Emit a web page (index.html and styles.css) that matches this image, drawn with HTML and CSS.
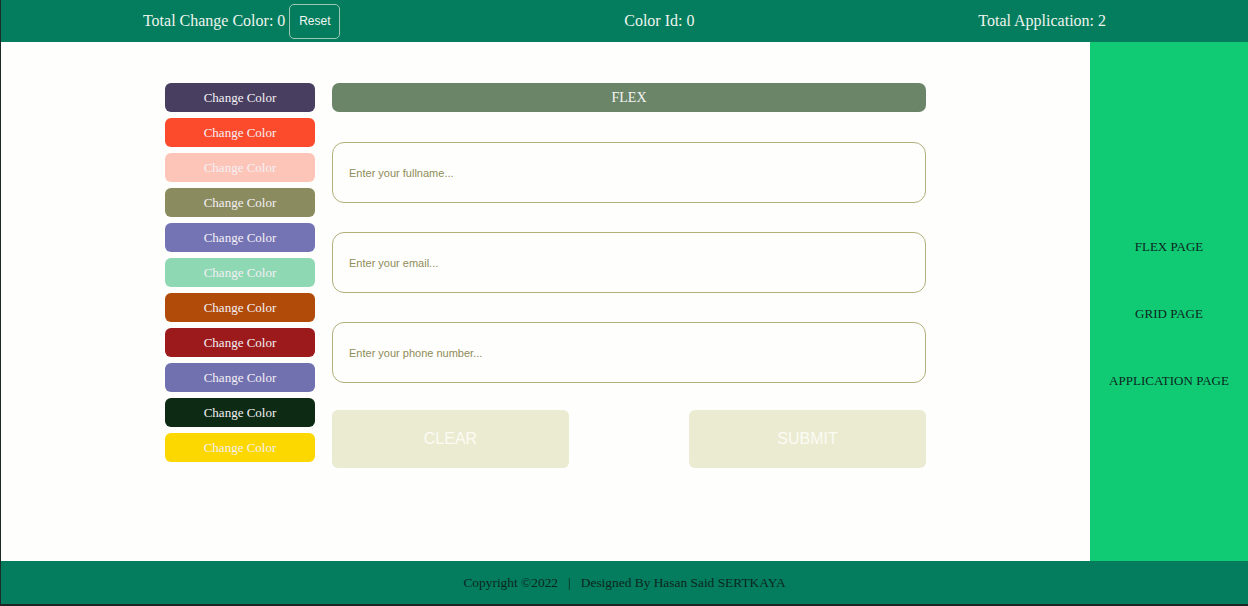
FILE: index.html
```html
<!DOCTYPE html>
<html>
<head>
<meta charset="utf-8">
<link rel="stylesheet" href="styles.css">
</head>
<body>
<div class="page">
  <header class="topbar">
    <div class="stat">Total Change Color: 0 <button class="reset">Reset</button></div>
    <div class="stat">Color Id: 0</div>
    <div class="stat">Total Application: 2</div>
  </header>
  <div class="middle">
    <main class="main">
      <div class="content">
        <div class="colors">
          <button class="cbtn c1">Change Color</button>
          <button class="cbtn c2">Change Color</button>
          <button class="cbtn c3">Change Color</button>
          <button class="cbtn c4">Change Color</button>
          <button class="cbtn c5">Change Color</button>
          <button class="cbtn c6">Change Color</button>
          <button class="cbtn c7">Change Color</button>
          <button class="cbtn c8">Change Color</button>
          <button class="cbtn c9">Change Color</button>
          <button class="cbtn c10">Change Color</button>
          <button class="cbtn c11">Change Color</button>
        </div>
        <div class="form">
          <div class="flexbar">FLEX</div>
          <input class="field" type="text" placeholder="Enter your fullname...">
          <input class="field" type="text" placeholder="Enter your email...">
          <input class="field" type="text" placeholder="Enter your phone number...">
          <div class="actions">
            <button class="act">CLEAR</button>
            <button class="act">SUBMIT</button>
          </div>
        </div>
      </div>
    </main>
    <nav class="side">
      <a class="navlink">FLEX PAGE</a>
      <a class="navlink">GRID PAGE</a>
      <a class="navlink">APPLICATION PAGE</a>
    </nav>
  </div>
  <footer class="footer">Copyright ©2022 &nbsp; | &nbsp; Designed By Hasan Said SERTKAYA</footer>
</div>
</body>
</html>
```

FILE: styles.css
```css
* { box-sizing: border-box; }
html, body { margin: 0; padding: 0; }
body {
  font-family: "Liberation Serif", "Times New Roman", serif;
  background: #1c2626;
  height: 606px;
  overflow: hidden;
}
.page {
  display: flex;
  flex-direction: column;
  height: 604px;
  border-left: 1px solid #1c2a28;
}
.topbar {
  height: 42px;
  flex: none;
  background: #037d5d;
  display: flex;
  justify-content: space-around;
  align-items: center;
  color: #eef4ee;
  font-size: 16px;
}
.stat { display: flex; align-items: center; gap: 4px; }
.reset {
  font-family: "Liberation Sans", Arial, sans-serif;
  font-size: 12px;
  color: #f4f8f4;
  background: transparent;
  border: 1px solid #9cc8b4;
  border-radius: 5px;
  width: 51px;
  height: 35px;
  padding: 0;
}
.middle {
  flex: 1;
  display: flex;
}
.main {
  flex: 1;
  background: #fefefc;
  display: flex;
  justify-content: center;
  padding-top: 41px;
}
.content {
  display: flex;
  gap: 17px;
  align-items: flex-start;
}
.colors {
  width: 150px;
  display: flex;
  flex-direction: column;
  gap: 6px;
}
.cbtn {
  height: 29px;
  border: none;
  border-radius: 6px;
  color: #f4f0f4;
  font-family: "Liberation Serif", "Times New Roman", serif;
  font-size: 13px;
  padding: 0;
}
.c1 { background: #473e60; }
.c2 { background: #fb4b2c; }
.c3 { background: #fdc4b8; }
.c4 { background: #8b8b60; }
.c5 { background: #7474b5; }
.c6 { background: #8fd8b4; }
.c7 { background: #b14b0a; }
.c8 { background: #9c1a1c; }
.c9 { background: #7171b0; }
.c10 { background: #0c2a14; }
.c11 { background: #fcd700; }
.form {
  width: 594px;
  display: flex;
  flex-direction: column;
}
.flexbar {
  height: 29px;
  border-radius: 7px;
  background: #6b8569;
  color: #f4f4f4;
  font-size: 14px;
  display: flex;
  align-items: center;
  justify-content: center;
  margin-bottom: 30px;
}
.field {
  height: 61px;
  border: 1px solid #b3b07c;
  border-radius: 12px;
  padding: 0 16px;
  font-family: "Liberation Sans", Arial, sans-serif;
  font-size: 11px;
  background: transparent;
  margin-bottom: 29px;
  outline: none;
}
.field::placeholder { color: #8f8c58; }
.actions {
  display: flex;
  justify-content: space-between;
  margin-top: -2px;
}
.act {
  width: 237px;
  height: 58px;
  border: none;
  border-radius: 6px;
  background: #ebebd2;
  color: #fbfbf4;
  font-family: "Liberation Sans", Arial, sans-serif;
  font-size: 16px;
}
.side {
  width: 158px;
  flex: none;
  background: #10cb74;
  display: flex;
  flex-direction: column;
  align-items: center;
  justify-content: center;
  gap: 51px;
  padding-top: 25px;
}
.navlink {
  color: #0c2620;
  font-size: 13px;
}
.footer {
  height: 43px;
  flex: none;
  background: #037d5d;
  color: #0c2620;
  font-size: 13.4px;
  display: flex;
  align-items: center;
  justify-content: center;
}
```
